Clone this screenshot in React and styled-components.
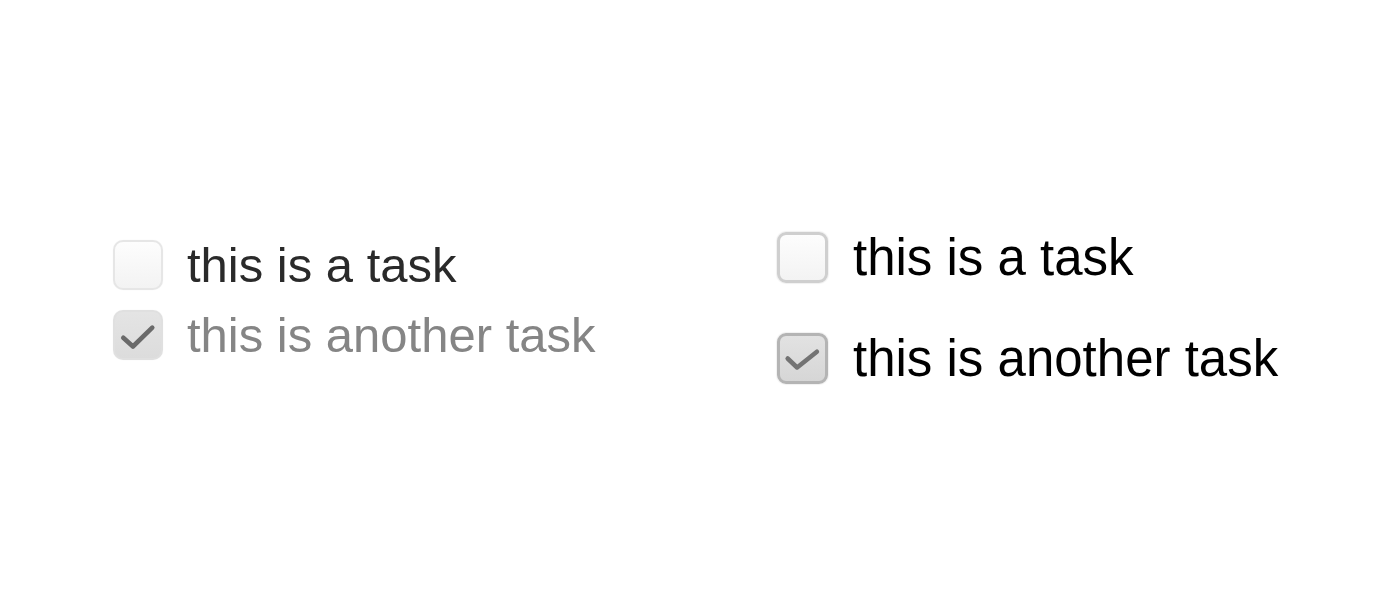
import React from 'react';
import styled, { createGlobalStyle } from 'styled-components';

const Global = createGlobalStyle`
  html, body { margin: 0; padding: 0; background: #fff; }
  body { font-family: "Liberation Sans", Arial, sans-serif; }
`;

const Page = styled.div`
  height: 600px;
  display: flex;
  align-items: center;
  padding-left: 113px;
  box-sizing: border-box;
`;

const TaskList = styled.ul`
  list-style: none;
  margin: 0;
  padding: 0;
  display: flex;
  flex-direction: column;
  gap: ${p => p.$big ? 50 : 20}px;
  width: ${p => p.$big ? 'auto' : '664px'};
  margin-top: ${p => p.$big ? 16 : 0}px;
`;

const Task = styled.li`
  display: flex;
  align-items: center;
  gap: ${p => p.$big ? 25 : 24}px;
  font-size: ${p => p.$big ? 51 : 49}px;
  line-height: 1;
  color: ${p => p.$big ? '#000' : p.$done ? '#858585' : '#2a2a2a'};
`;

const Box = styled.span`
  flex: none;
  box-sizing: border-box;
  width: ${p => p.$big ? 51 : 50}px;
  height: ${p => p.$big ? 51 : 50}px;
  border-radius: ${p => p.$big ? 9 : 10}px;
  border: ${p => p.$big ? '3px solid' : '2px solid'};
  border-color: ${p => p.$big ? (p.$done ? '#b4b4b4' : '#cfcfcf') : (p.$done ? '#e0e0e0' : '#e6e6e6')};
  background: ${p => p.$done
    ? (p.$big ? 'linear-gradient(#e2e2e2, #d6d6d6)' : 'linear-gradient(#e4e4e4, #dcdcdc)')
    : 'linear-gradient(#fdfdfd, #f3f3f3)'};
  box-shadow: ${p => p.$big ? '0 0 1px 1px rgba(0,0,0,0.06)' : '0 0 1px rgba(0,0,0,0.08)'};
  display: flex;
  align-items: center;
  justify-content: center;
`;

const Check = styled.svg`
  width: 100%;
  height: 100%;
`;

function Checkbox({ big, done }) {
  return (
    <Box $big={big} $done={done}>
      {done && (
        <Check viewBox="0 0 50 50">
          <path
            d={big ? 'M8.5 25 L19 35 L41 17.5' : 'M9 28 L19.5 37.5 L40.5 17'}
            fill="none"
            stroke={big ? '#737373' : '#6a6a6a'}
            strokeWidth="5"
            strokeLinecap="round"
            strokeLinejoin="round"
          />
        </Check>
      )}
    </Box>
  );
}

const tasks = [
  { text: 'this is a task', done: false },
  { text: 'this is another task', done: true },
];

export default function App() {
  return (
    <>
      <Global />
      <Page>
        <TaskList>
          {tasks.map(t => (
            <Task key={t.text} $done={t.done}>
              <Checkbox done={t.done} />
              {t.text}
            </Task>
          ))}
        </TaskList>
        <TaskList $big>
          {tasks.map(t => (
            <Task key={t.text} $big $done={t.done}>
              <Checkbox big done={t.done} />
              {t.text}
            </Task>
          ))}
        </TaskList>
      </Page>
    </>
  );
}
